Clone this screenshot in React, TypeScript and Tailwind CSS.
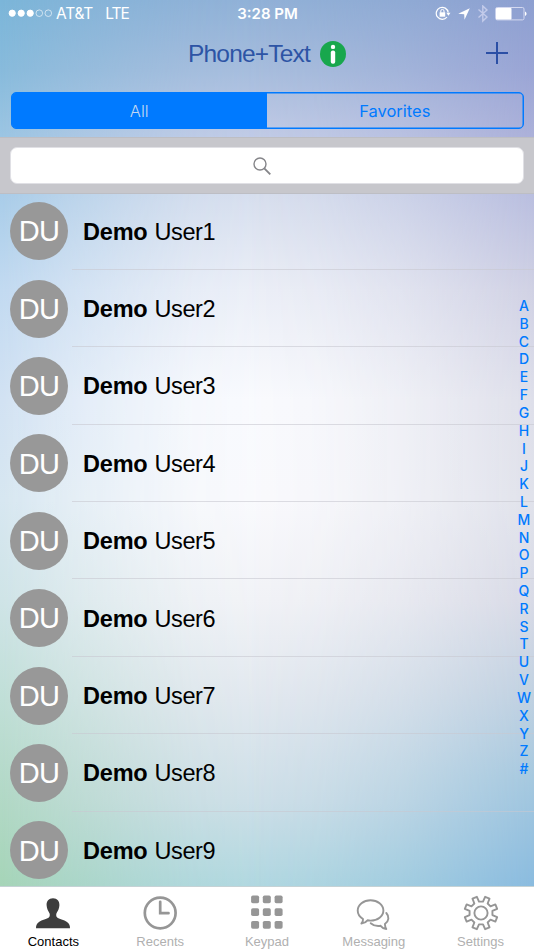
import React from 'react';


type Contact = {
  firstName: string;
  lastName: string;
}

type TabItem = {
  label: string;
  icon: React.ReactNode;
  active?: boolean;
}


const contacts: Contact[] = Array.from({ length: 9 }, (_, i) => ({
  firstName: 'Demo',
  lastName: `User${i + 1}`,
}));

const letters = 'ABCDEFGHIJKLMNOPQRSTUVWXYZ#'.split('');

// Outline of a gear with eight teeth, centred on 18,18
const gearPath = Array.from({ length: 8 }, (_, i) => {
  const angle = 22.5 + i * 45;
  const corners = [[-12.5, 11.6], [-8.2, 16.7], [8.2, 16.7], [12.5, 11.6]];
  return corners.map(([offset, radius]) => {
    const a = ((angle + offset) * Math.PI) / 180;
    return `${(18 + radius * Math.sin(a)).toFixed(2)} ${(18 - radius * Math.cos(a)).toFixed(2)}`;
  }).join('L');
}).join('L');


const ContactsIcon = () => (
  <svg width="36" height="36" viewBox="0 0 36 36" fill="#3d3d3d">
    <path d="M18 3.200c-4.300 0-6.600 3-6.400 7 .1 1.700.4 3 1 4.500.6 1.600 1.600 2.700 2 3.900.4 1.400.2 3-.8 4-1.600 1.500-7 2.500-9.800 4.300C1.700 28.400 1 30.400 1 33.200h34c0-2.800-.7-4.800-3-6.300-2.800-1.800-8.200-2.800-9.800-4.300-1-1-1.200-2.600-.8-4 .4-1.200 1.400-2.300 2-3.900.6-1.500.9-2.800 1-4.500.2-4-2.100-7-6.400-7z" />
  </svg>
);

const RecentsIcon = () => (
  <svg width="36" height="36" viewBox="0 0 36 36" fill="none" stroke="#969696">
    <circle cx="18.200" cy="18" r="15.400" strokeWidth="2.700" />
    <path d="M18.200 6.800V18.200H26.500" strokeWidth="2.700" strokeLinecap="round" />
  </svg>
);

const KeypadIcon = () => (
  <svg width="36" height="36" viewBox="0 0 36 36" fill="#969696">
    {[0.5, 13.2, 25.9].map((y) =>
      [2.1, 13.8, 25.6].map((x) => (
        <rect key={`${x}-${y}`} x={x} y={y} width="8" height="7.800" rx="1.700" />
      ))
    )}
  </svg>
);

const MessagingIcon = () => (
  <svg width="36" height="36" viewBox="0 0 36 36" fill="none" stroke="#969696" strokeWidth="1.900" strokeLinejoin="round" strokeLinecap="round">
    <path d="M14.500 5.300C7.500 5.300 1.700 9.900 1.700 15.500c0 3.600 2.100 6.500 5.300 8.500.2 1.800-.3 3.200-1.600 4.500 3.100-.3 4.600-1.300 6.100-3.200 1 .2 2 .3 3 .3 7.100 0 12.900-4.500 12.900-10.100S21.600 5.300 14.500 5.300z" />
    <path d="M30.300 18c3.200 3.500 2.800 8.200-1.400 11 .1 2.200.4 3.500 1.400 5-2.800-.4-4.400-1.500-5.700-3.200-3.700.6-7.200-.2-9.900-2.600" />
  </svg>
);

const SettingsIcon = () => (
  <svg width="36" height="36" viewBox="0 0 36 36" fill="none" stroke="#969696" strokeWidth="1.900" strokeLinejoin="round">
    <circle cx="18" cy="18" r="6.600" />
    <path d={`M${gearPath}Z`} />
  </svg>
);


const tabs: TabItem[] = [
  { label: 'Contacts', icon: <ContactsIcon />, active: true },
  { label: 'Recents', icon: <RecentsIcon /> },
  { label: 'Keypad', icon: <KeypadIcon /> },
  { label: 'Messaging', icon: <MessagingIcon /> },
  { label: 'Settings', icon: <SettingsIcon /> },
];


// Left, middle and right colour columns faded into each other
const Wallpaper = () => (
  <div className="absolute inset-0 -z-10">
    <div className="absolute inset-0 bg-[linear-gradient(180deg,#7bb6d9_0px,#88bbdc_70px,#9bc5e3_135px,#a9cde9_195px,#c2daf1_290px,#d2e2f3_400px,#d7e7f1_500px,#cfe4e7_600px,#c0dfd7_700px,#b3d9c7_790px,#a6d5b8_886px)]"></div>
    <div className="absolute inset-0 bg-[linear-gradient(180deg,#91b1d7_0px,#a7bddd_70px,#c1cbe6_135px,#d8dfee_195px,#eceff7_290px,#fafbfe_400px,#fafafd_500px,#f2f3f7_600px,#e2e8ef_700px,#cedfe8_800px,#b1d8e1_886px)] [mask-image:linear-gradient(90deg,transparent_0%,rgba(0,0,0,0.35)_12%,rgba(0,0,0,0.64)_24%,rgba(0,0,0,0.88)_36%,black_50%)]"></div>
    <div className="absolute inset-0 bg-[linear-gradient(180deg,#8d9fd0_0px,#9aa5d5_70px,#abb0d9_135px,#b9bedf_195px,#d0d1e4_290px,#dedfea_400px,#e0e2eb_500px,#d8dae6_600px,#c1d1e1_690px,#a5c8df_780px,#8abbdf_886px)] [mask-image:linear-gradient(90deg,transparent_46%,rgba(0,0,0,0.12)_60%,rgba(0,0,0,0.38)_75%,rgba(0,0,0,0.7)_88%,black_100%)]"></div>
  </div>
);

const StatusBar = () => (
  <div className="grid h-7 grid-cols-3 items-center pl-[8px] pr-[7px] font-['Inter',sans-serif] text-[15px] leading-7 text-white">
    <div className="flex items-center">
      <svg width="46" height="10" viewBox="0 0 46 10" fill="white" stroke="white">
        <circle cx="4.200" cy="4.200" r="3.100" />
        <circle cx="13.200" cy="4.200" r="3.100" />
        <circle cx="22.200" cy="4.200" r="3.100" />
        <circle cx="31.300" cy="4.200" r="3.300" fill="none" strokeWidth=".6" />
        <circle cx="40.300" cy="4.200" r="3.300" fill="none" strokeWidth=".6" />
      </svg>
      <span className="ml-[2px] text-[15.500px] tracking-[-0.2px]">AT&amp;T</span>
      <span className="ml-[12px] text-[15.500px] tracking-[-1px]">LTE</span>
    </div>
    <div className="text-center text-[15px] font-semibold">3:28 PM</div>
    <div className="flex items-center justify-end">
      <svg width="16" height="16" viewBox="0 0 16 16" fill="none" stroke="white">
        <path d="M12 11A6 6 0 1 1 13.200 6.500" strokeWidth="1.200" />
        <path d="M11.300 6.700h4.200l-2.100 3z" fill="white" stroke="none" />
        <rect x="4.600" y="6.300" width="5.600" height="4.400" fill="white" stroke="none" />
        <path d="M5.800 6.800V5a1.600 1.600 0 0 1 3.200 0v1.800" strokeWidth="1" />
      </svg>
      <svg className="ml-[7px]" width="12" height="12" viewBox="0 0 12 12" fill="white">
        <path d="M11.800.2 6.500 11.700 6.200 6.200.2 5.700z" />
      </svg>
      <svg className="ml-[7px]" width="12" height="18" viewBox="0 0 12 18" fill="none" stroke="#c3cbea" strokeWidth="1.400">
        <path d="m1.500 4.500 8.500 7.500-4.200 4V1l4.200 4L1.500 12.500" />
      </svg>
      <svg className="ml-[6px]" width="32" height="14" viewBox="0 0 32 14">
        <rect x=".7" y=".5" width="28.300" height="12.400" rx="1.500" fill="none" stroke="#d4d9f0" />
        <rect x="1" y=".9" width="15.500" height="11.600" rx=".8" fill="white" />
        <path d="M30 4.500c2 .8 2 3.700 0 4.500z" fill="white" />
      </svg>
    </div>
  </div>
);

const TitleBar = () => (
  <div className="grid h-16 grid-cols-[1fr_auto_1fr] items-start pt-[12px]">
    <div></div>
    <div className="flex items-center gap-[10px]">
      <h1 className="text-[24.500px] leading-7 tracking-[-0.8px] text-[#2d54a5]">Phone+Text</h1>
      <svg width="26" height="26" viewBox="0 0 26 26">
        <circle cx="13" cy="13" r="13" fill="#18a74d" />
        <circle cx="13" cy="5.900" r="2.200" fill="white" />
        <rect x="10.800" y="9.600" width="4.400" height="13.200" rx="2" fill="white" />
      </svg>
    </div>
    <button className="mt-[2px] mr-[26px] justify-self-end" aria-label="Add contact">
      <svg width="22" height="22" viewBox="0 0 22 22" fill="none" stroke="#2b4fa5" strokeWidth="2">
        <path d="M0 11h22M11 0v22" />
      </svg>
    </button>
  </div>
);

const SegmentedControl = () => (
  <div className="mx-[10.500px] grid h-[37px] grid-cols-2 overflow-hidden rounded-[5px] border border-[#007aff] font-['Inter',sans-serif] text-[16.500px] shadow-[inset_0_0_0_0.5px_#007aff]">
    <button className="bg-[#007aff] pt-px font-light text-[#c3d8f2]">All</button>
    <button className="pt-px text-[#007aff]">Favorites</button>
  </div>
);

const SearchBar = () => (
  <div className="mt-[8px] h-[57px] border-y border-[#bdbec4] bg-[#c7c7cc] px-[10px] pt-[9px]">
    <div className="flex h-[37px] items-center justify-center rounded-[7px] border border-[#e0e0e5] bg-white pr-[10px]">
      <svg width="18" height="18" viewBox="0 0 18 18" fill="none" stroke="#858589" strokeWidth="1.400">
        <circle cx="7" cy="7" r="6" />
        <path d="m11.300 11.300 6 6" strokeWidth="1.900" />
      </svg>
    </div>
  </div>
);

const ContactRow: React.FC<{ contact: Contact }> = ({ contact }) => (
  <li className="flex h-[77.400px] items-center pl-[10px]">
    <div className="flex h-[58px] w-[58px] shrink-0 items-center justify-center rounded-full bg-[#989898] pt-[2px] text-[29px] tracking-[-0.8px] text-white">
      {contact.firstName[0]}{contact.lastName[0]}
    </div>
    <div className="ml-[4px] flex h-full flex-1 items-center border-b border-[#c8c8d0]/60 pl-[11px] pt-[3px] text-[23.500px] text-black">
      <span className="font-bold tracking-[-0.2px]">{contact.firstName}</span>
      <span className="ml-[7px] tracking-[-0.400px]">{contact.lastName}</span>
    </div>
  </li>
);

const AlphabetIndex = () => (
  <div className="absolute right-[3px] top-[297px] flex w-[14px] flex-col items-center font-['Inter',sans-serif] text-[14px] font-medium text-[#007aff]">
    {letters.map((letter) => (
      <span key={letter} className="h-[17.820px] leading-[17.820px]">{letter}</span>
    ))}
  </div>
);

const TabBar = () => (
  <nav className="grid h-[64px] grid-cols-5 border-t border-[#c5d2d5] bg-white">
    {tabs.map((tab) => (
      <button
        key={tab.label}
        className={`flex flex-col items-center pt-[8px] text-[13px] leading-[21px] ${tab.active ? 'text-black' : 'text-[#b0b0b0]'}`}
      >
        {tab.icon}
        <span>{tab.label}</span>
      </button>
    ))}
  </nav>
);


export default function App() {
  return (
    <div className="relative isolate flex h-[950px] w-[534px] flex-col overflow-hidden font-['Liberation_Sans',Arial,sans-serif]">
      <Wallpaper />
      <StatusBar />
      <TitleBar />
      <SegmentedControl />
      <SearchBar />
      <main className="min-h-0 flex-1 overflow-hidden">
        <ul className="-mt-[1.500px]">
          {contacts.map((contact) => (
            <ContactRow key={contact.lastName} contact={contact} />
          ))}
        </ul>
      </main>
      <AlphabetIndex />
      <TabBar />
    </div>
  );
}
